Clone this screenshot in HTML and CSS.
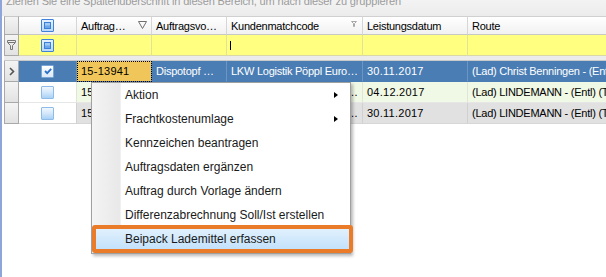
FILE: index.html
```html
<!DOCTYPE html>
<html lang="de">
<head>
<meta charset="utf-8">
<title>Auftragsliste</title>
<link rel="stylesheet" href="styles.css">
</head>
<body>
<div class="app">
  <div class="group-panel"><div class="group-text">Ziehen Sie eine Spaltenüberschrift in diesen Bereich, um nach dieser zu gruppieren</div></div>
  <div class="grid">
    <div class="row header">
      <div class="cell selector"></div>
      <div class="cell check"><span class="cb cb-ind"><span></span></span></div>
      <div class="cell hdr"><span class="txt">Auftrag…</span>
        <svg class="sort" width="9" height="8" viewBox="0 0 9 8"><path d="M0.5 0.5 H8.5 L4.5 7.5 Z" fill="none" stroke="#6f6f6f"/></svg>
      </div>
      <div class="cell hdr"><span class="txt">Auftragsvo…</span></div>
      <div class="cell hdr"><span class="txt">Kundenmatchcode</span>
        <svg class="fil" width="6" height="6" viewBox="0 0 6 6"><path d="M0.5 0.5 H5.5 L3.5 2.5 V5.5 H2.5 V2.5 Z" fill="none" stroke="#a8a8a8"/></svg>
      </div>
      <div class="cell hdr"><span class="txt">Leistungsdatum</span></div>
      <div class="cell hdr last"><span class="txt">Route</span></div>
    </div>
    <div class="row filter">
      <div class="cell selector">
        <svg width="9" height="10" viewBox="0 0 9 10"><path d="M0.5 0.5 H8.5 V2.5 L5.5 5.5 V9.5 H3.5 V5.5 L0.5 2.5 Z" fill="none" stroke="#777"/><path d="M1 2.5 H8" stroke="#777"/></svg>
      </div>
      <div class="cell check"><span class="cb cb-ind"><span></span></span></div>
      <div class="cell"></div>
      <div class="cell"></div>
      <div class="cell"><span class="caret"></span></div>
      <div class="cell"></div>
      <div class="cell last"></div>
    </div>
    <div class="sep"></div>
    <div class="row data selected">
      <div class="cell selector">
        <svg width="6" height="9" viewBox="0 0 6 9"><path d="M1 1 L4.5 4.5 L1 8" fill="none" stroke="#555" stroke-width="1.6"/></svg>
      </div>
      <div class="cell check"><span class="cb cb-on"><svg width="10" height="10" viewBox="0 0 10 10"><path d="M2 5 L4.2 7.2 L8.2 2.8" fill="none" stroke="#2a6fc9" stroke-width="1.8"/></svg></span></div>
      <div class="cell focus num">15-13941</div>
      <div class="cell">Dispotopf …</div>
      <div class="cell">LKW Logistik Pöppl Euro…</div>
      <div class="cell num">30.11.2017</div>
      <div class="cell last">(Lad) Christ Benningen - (Entl) (T</div>
    </div>
    <div class="row data green">
      <div class="cell selector"></div>
      <div class="cell check"><span class="cb cb-off"></span></div>
      <div class="cell num">15-13942</div>
      <div class="cell">Dispotopf …</div>
      <div class="cell">LKW Logistik Pöppl Euro…</div>
      <div class="cell num">04.12.2017</div>
      <div class="cell last">(Lad) LINDEMANN - (Entl) (T</div>
    </div>
    <div class="row data gray">
      <div class="cell selector"></div>
      <div class="cell check"><span class="cb cb-off"></span></div>
      <div class="cell num">15-13943</div>
      <div class="cell">Dispotopf …</div>
      <div class="cell">LKW Logistik Pöppl Euro…</div>
      <div class="cell num">30.11.2017</div>
      <div class="cell last">(Lad) LINDEMANN - (Entl) (T</div>
    </div>
  </div>

  <div class="menu">
    <div class="item">Aktion<span class="arrow"></span></div>
    <div class="item">Frachtkostenumlage<span class="arrow"></span></div>
    <div class="item">Kennzeichen beantragen</div>
    <div class="item">Auftragsdaten ergänzen</div>
    <div class="item">Auftrag durch Vorlage ändern</div>
    <div class="item">Differenzabrechnung Soll/Ist erstellen</div>
    <div class="item hot">Beipack Lademittel erfassen<span class="mark"></span></div>
  </div>
</div>
</body>
</html>
```

FILE: styles.css
```css
html, body {
  margin: 0;
  padding: 0;
  background: #fff;
}
body {
  font-family: "Liberation Sans", Arial, sans-serif;
  font-size: 11px;
  color: #000;
}
.app {
  position: relative;
  height: 277px;
  overflow: hidden;
  border-left: 2px solid #8fa4d8;
  box-sizing: border-box;
}
.group-panel {
  height: 16px;
  overflow: hidden;
  background: linear-gradient(#f3f3f3, #ececec);
  padding-left: 4px;
}
.group-text {
  margin-top: -6px;
  line-height: 14px;
  font-size: 11px;
  letter-spacing: -0.15px;
  color: #9c9c9c;
  white-space: nowrap;
}
.grid {
  margin-left: 2px;
}
.row {
  display: grid;
  grid-template-columns: 15px 58px 75px 75px 136px 105px 1fr;
}
.cell {
  box-sizing: border-box;
  border-right: 1px solid #d6d6d6;
  border-bottom: 1px solid #d6d6d6;
  white-space: nowrap;
  overflow: hidden;
  padding-left: 4px;
  display: flex;
  align-items: center;
  font-size: 11px;
  letter-spacing: -0.25px;
}
.cell.last { border-right: none; }
.cell.num { letter-spacing: 0.25px; }

/* header */
.header .cell {
  height: 19px;
  border-top: 1px solid #d0d0d0;
  border-bottom: 1px solid #c8c8c8;
  background: linear-gradient(#ffffff, #f1f1f1);
}
.header .hdr { justify-content: space-between; padding-right: 4px; }
.header .sort { margin-top: -2px; }
.header .fil { align-self: flex-start; margin-top: 4px; margin-right: 1px; }

.cell.selector {
  padding: 0;
  justify-content: center;
  background: linear-gradient(#f4f4f4, #e2e2e2);
  border-left: 1px solid #a9a9a9;
  border-right: 1px solid #a9a9a9;
  border-bottom: 1px solid #a9a9a9;
}
.header .cell.selector { border-top: 1px solid #c8c8c8; }
.cell.check { justify-content: center; padding: 0; }

/* filter row */
.filter .cell {
  height: 21px;
  background: #ffff80;
  border-right-color: #e2e29a;
  border-bottom-color: #d8d8a8;
}
.filter .cell.selector {
  background: linear-gradient(#f4f4f4, #e2e2e2);
  border-right-color: #a9a9a9;
  border-bottom-color: #a9a9a9;
}
.caret {
  display: block;
  width: 1px;
  height: 9px;
  background: #000;
  margin-left: -1px;
}

.sep {
  height: 5px;
  box-sizing: border-box;
  background: #ebebeb;
  border-bottom: 1px solid #c9c9c9;
}

/* data rows */
.data .cell { height: 21px; }
.selected .cell {
  background: #4a7db3;
  color: #fff;
  border-right-color: #6b96c4;
  border-bottom-color: #4a7db3;
}
.selected .cell.focus {
  background: #f0c65a;
  color: #000;
  outline: 1px dotted #000;
  outline-offset: -1px;
}
.green .cell { background: #f0f8e6; border-right-color: #dfe6d4; border-bottom-color: #e6e6e6; }
.gray .cell { background: #e1e1e1; border-right-color: #d0d0d0; border-bottom-color: #d6d6d6; }
.data .cell.check { background: #fff; }
.selected .cell.check { background: #4a7db3; }
.data .cell.selector {
  background: linear-gradient(#f4f4f4, #e2e2e2);
  border-right-color: #a9a9a9;
  border-bottom-color: #a9a9a9;
  color: #555;
}

/* checkboxes */
.cb {
  display: flex;
  align-items: center;
  justify-content: center;
  width: 13px;
  height: 13px;
  box-sizing: border-box;
  border-radius: 1px;
}
.cb-ind {
  border: 1px solid #3f82d8;
  background: linear-gradient(#e6f2fd, #b9d9f7);
}
.cb-ind span {
  width: 7px;
  height: 7px;
  box-sizing: border-box;
  border: 1px solid #3b7fd6;
  background: linear-gradient(#9fcaf4 0 45%, #6aa6e8 55% 100%);
}
.cb-on {
  border: 1px solid #7aa6d6;
  background: linear-gradient(#ffffff, #dce9f7);
}
.cb-off {
  border: 1px solid #8ebbe9;
  background: linear-gradient(#f0f7fe 0%, #d2e7fa 50%, #a9d1f5 100%);
}

/* context menu */
.menu {
  position: absolute;
  left: 89px;
  top: 82px;
  width: 260px;
  box-sizing: border-box;
  padding-bottom: 2px;
  background:
    linear-gradient(to right, #f4f4f4 0, #e8e8e8 28px, #e2e2e2 28px, #ffffff 29px, #ffffff 100%);
  border: 1px solid #a0a0a0;
  box-shadow: 2px 2px 3px rgba(0, 0, 0, 0.28);
  font-size: 12px;
  color: #1a1a1a;
}
.item {
  position: relative;
  height: 24px;
  line-height: 24px;
  padding-left: 33px;
  white-space: nowrap;
}
.arrow {
  position: absolute;
  right: 12px;
  top: 9px;
  width: 0;
  height: 0;
  border-top: 3.5px solid transparent;
  border-bottom: 3.5px solid transparent;
  border-left: 4px solid #000;
}
.item.hot {
  background: linear-gradient(#e4f2fd, #c0e0fb);
}
.mark {
  position: absolute;
  left: 0;
  right: -3px;
  top: -2px;
  bottom: -2px;
  border: 4px solid #ea7c29;
  border-radius: 3px;
}
```
